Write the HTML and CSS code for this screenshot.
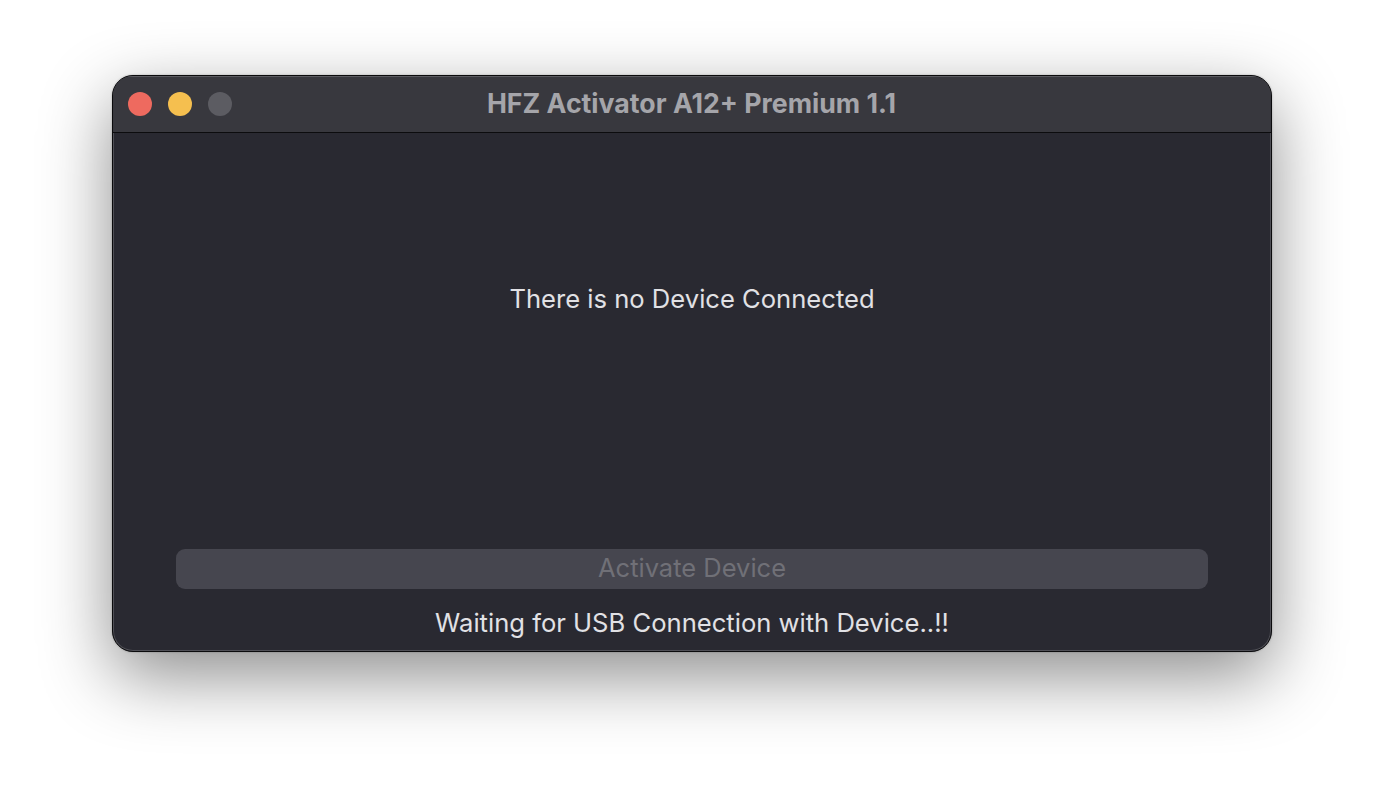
FILE: index.html
```html
<!DOCTYPE html>
<html>
<head>
<meta charset="utf-8">
<title>HFZ Activator A12+ Premium 1.1</title>
<link rel="stylesheet" href="styles.css">
</head>
<body>
<div class="window">
  <div class="titlebar">
    <div class="lights">
      <span class="light red"></span>
      <span class="light yellow"></span>
      <span class="light grey"></span>
    </div>
    <div class="title">HFZ Activator A12+ Premium 1.1</div>
  </div>
  <div class="content">
    <div class="message">There is no Device Connected</div>
    <div class="spacer"></div>
    <button class="activate" disabled>Activate Device</button>
    <div class="status">Waiting for USB Connection with Device..!!</div>
  </div>
</div>
</body>
</html>
```
FILE: styles.css
```css
html, body {
  margin: 0;
  padding: 0;
  background: #ffffff;
}
body {
  width: 1384px;
  height: 800px;
  overflow: hidden;
  font-family: Inter, "Liberation Sans", sans-serif;
}
.window {
  box-sizing: border-box;
  width: 1160px;
  height: 577px;
  margin: 75px auto 0 112px;
  border: 1px solid #0b0b0d;
  border-radius: 21px;
  background: #292931;
  box-shadow:
    inset 0 0 0 1px rgba(255, 255, 255, 0.18),
    0 24px 70px rgba(0, 0, 0, 0.45),
    0 0 2px rgba(0, 0, 0, 0.3);
  display: flex;
  flex-direction: column;
  overflow: hidden;
}
.titlebar {
  position: relative;
  height: 56px;
  flex: none;
  background: #38383e;
  border-bottom: 1px solid #0c0c0e;
  box-shadow: inset 0 1px 0 rgba(255, 255, 255, 0.18);
  display: flex;
  align-items: center;
  justify-content: center;
}
.lights {
  position: absolute;
  left: 15px;
  top: 16px;
  display: flex;
  gap: 16px;
}
.light {
  width: 24px;
  height: 24px;
  border-radius: 50%;
  display: block;
}
.red { background: #ee6a5f; }
.yellow { background: #f5bf4f; }
.grey { background: #5c5c62; }
.title {
  color: #a5a5aa;
  font-weight: 700;
  font-size: 26.7px;
  margin-right: 1px;
  margin-bottom: 2px;
}
.content {
  flex: 1;
  display: flex;
  flex-direction: column;
  align-items: center;
  padding: 151px 63px 13px;
}
.message {
  color: #e1e1e5;
  font-size: 25.6px;
  line-height: 30px;
}
.spacer {
  flex: 1;
}
.activate {
  align-self: stretch;
  height: 40px;
  border: none;
  border-radius: 9px;
  background: #46464f;
  color: #707077;
  font-family: Inter, "Liberation Sans", sans-serif;
  font-size: 25.5px;
  padding: 0 0 3px;
}
.status {
  margin-top: 19px;
  color: #e1e1e5;
  font-size: 25.6px;
  line-height: 30px;
}
```
